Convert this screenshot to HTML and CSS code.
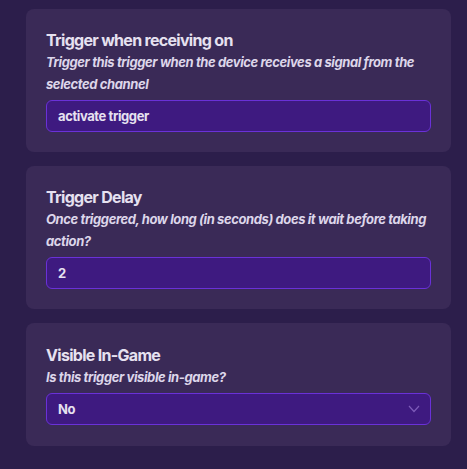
FILE: index.html
```html
<!DOCTYPE html>
<html>
<head>
<meta charset="utf-8">
<link rel="stylesheet" href="styles.css">
</head>
<body>
<div class="panel">
  <div class="card">
    <div class="title">Trigger when receiving on</div>
    <div class="desc">Trigger this trigger when the device receives a signal from the selected channel</div>
    <div class="field">activate trigger</div>
  </div>
  <div class="card">
    <div class="title">Trigger Delay</div>
    <div class="desc">Once triggered, how long (in seconds) does it wait before taking action?</div>
    <div class="field">2</div>
  </div>
  <div class="card last">
    <div class="title">Visible In-Game</div>
    <div class="desc">Is this trigger visible in-game?</div>
    <div class="field select">No
      <svg class="chev" width="12" height="8" viewBox="0 0 12 8"><path d="M1 1 L6 6.5 L11 1" fill="none" stroke="#7d5bb8" stroke-width="1.2"/></svg>
    </div>
  </div>
</div>
</body>
</html>
```
FILE: styles.css
```css
html, body {
  margin: 0;
  padding: 0;
  background: #2c1e4b;
  height: 100%;
}
body {
  font-family: Inter, "Noto Sans", sans-serif;
  color: #e6e1f0;
}
.panel {
  display: flex;
  flex-direction: column;
  gap: 14px;
  padding: 9px 16px 0 26px;
}
.card {
  background: #3a2a57;
  border-radius: 8px;
  padding: 21px 20px 20px 20px;
  display: flex;
  flex-direction: column;
}
.card.last {
  padding-top: 22px;
  padding-bottom: 21px;
}
.title {
  font-size: 16px;
  font-weight: 700;
  line-height: 20px;
  letter-spacing: -0.7px;
}
.desc {
  font-size: 13px;
  font-style: italic;
  font-weight: 700;
  line-height: 22px;
  letter-spacing: -0.4px;
  margin-top: 1px;
  color: #ddd6ea;
}
.field {
  margin-top: 5px;
  height: 32px;
  box-sizing: border-box;
  background: #3e1a80;
  border: 1px solid #6a31d8;
  border-radius: 6px;
  padding: 0 11px;
  display: flex;
  align-items: center;
  font-size: 13px;
  font-weight: 700;
  letter-spacing: -0.4px;
}
.select {
  justify-content: space-between;
}
.chev {
  margin-right: -1px;
}
```
